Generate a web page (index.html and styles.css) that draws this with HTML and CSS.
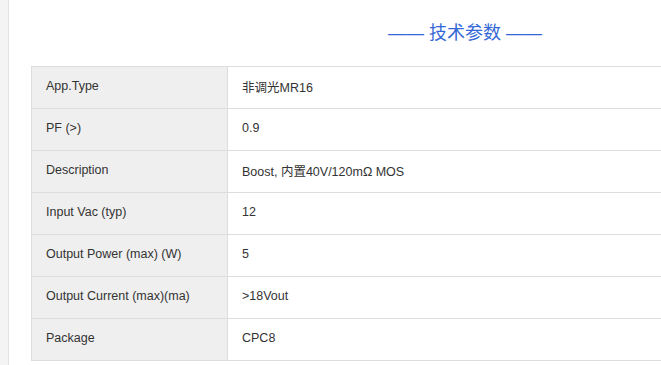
FILE: index.html
```html
<!DOCTYPE html>
<html lang="zh">
<head>
<meta charset="utf-8">
<title>技术参数</title>
<link rel="stylesheet" href="styles.css">
</head>
<body>
<div class="page">
  <aside class="side"></aside>
  <main class="main">
    <div class="inner">
      <h2 class="title">—— 技术参数 ——</h2>
      <table class="spec">
        <tbody>
          <tr><th>App.Type</th><td>非调光MR16</td></tr>
          <tr><th>PF (&gt;)</th><td>0.9</td></tr>
          <tr><th>Description</th><td>Boost, 内置40V/120mΩ MOS</td></tr>
          <tr><th>Input Vac (typ)</th><td>12</td></tr>
          <tr><th>Output Power (max) (W)</th><td>5</td></tr>
          <tr><th>Output Current (max)(ma)</th><td>&gt;18Vout</td></tr>
          <tr><th>Package</th><td>CPC8</td></tr>
        </tbody>
      </table>
    </div>
  </main>
</div>
</body>
</html>
```

FILE: styles.css
```css
html, body {
  margin: 0;
  padding: 0;
  background: #fff;
  overflow: hidden;
}
body {
  font-family: "Liberation Sans", Arial, "Noto Sans CJK SC", sans-serif;
  color: #333;
}
.page {
  display: flex;
  min-height: 365px;
}
.side {
  width: 8px;
  flex: none;
  background: #f4f4f4;
  border-right: 1px solid #e4e4e4;
}
.main {
  flex: 1;
  min-width: 0;
  overflow: hidden;
  padding-left: 22px;
}
.inner {
  width: 868px;
}
.title {
  margin: 0;
  height: 66px;
  line-height: 66px;
  text-align: center;
  font-weight: normal;
  font-size: 18px;
  color: #3368d6;
  font-family: "Liberation Sans", "Noto Sans CJK SC", sans-serif;
}
.spec {
  width: 868px;
  border-collapse: collapse;
  font-size: 12.5px;
}
.spec th, .spec td {
  height: 42px;
  padding: 0 0 3px 14px;
  border: 1px solid #dddddd;
  text-align: left;
  font-weight: normal;
  vertical-align: middle;
  box-sizing: border-box;
}
.spec th {
  width: 196px;
  background: #efefef;
}
.spec td {
  background: #fff;
}
```
